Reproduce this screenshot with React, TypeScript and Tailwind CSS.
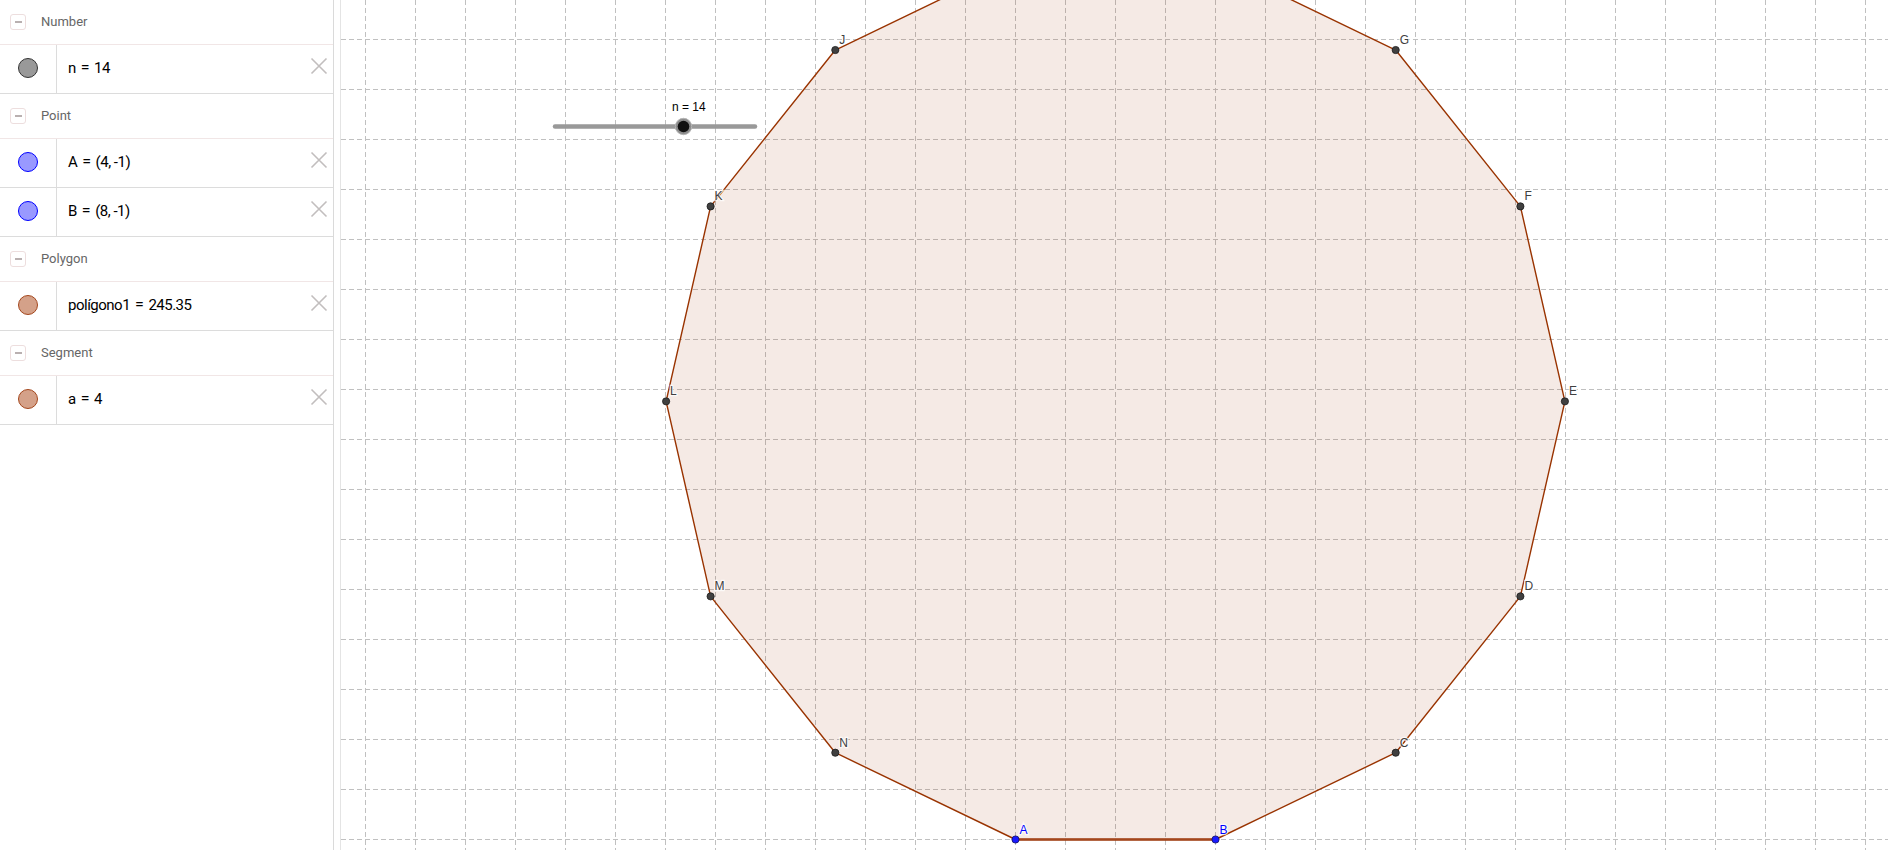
import * as React from "react";

type Item = { name: string; value: string; dot: string };
type Group = { title: string; items: Item[] };

const GROUPS: Group[] = [
  { title: "Number", items: [{ name: "n", value: "14", dot: "gray" }] },
  {
    title: "Point",
    items: [
      { name: "A", value: "(4, -1)", dot: "blue" },
      { name: "B", value: "(8, -1)", dot: "blue" },
    ],
  },
  { title: "Polygon", items: [{ name: "polígono1", value: "245.35", dot: "brown" }] },
  { title: "Segment", items: [{ name: "a", value: "4", dot: "brown" }] },
];

const DOTS: Record<string, string> = {
  gray: "bg-[#999999] border-[#333333]",
  blue: "bg-[#9999ff] border-[#0000ff]",
  brown: "bg-[#d4a189] border-[#a4471d]",
};

const LABELS = "ABCDEFGHIJKLMN".split("");

// regular 14-gon on A=(1015.5, 839.5), B=(1215.5, 839.5)
function vertices() {
  const n = 14;
  const side = 200;
  const R = side / (2 * Math.sin(Math.PI / n));
  const ap = side / (2 * Math.tan(Math.PI / n));
  const cx = 1115.5;
  const cy = 839.5 - ap;
  return LABELS.map((name, k) => {
    const t = ((-90 - 180 / n + (k * 360) / n) * Math.PI) / 180;
    return { name, x: cx + R * Math.cos(t), y: cy - R * Math.sin(t) };
  });
}

function Collapse() {
  return (
    <span className="ml-[10px] flex h-[16px] w-[16px] items-center justify-center rounded-[3px] border border-[#eddede]">
      <span className="h-[1.5px] w-[7px] bg-[#b9b0b0]" />
    </span>
  );
}

function Cross() {
  return (
    <svg width="18" height="18" viewBox="0 0 18 18" className="mr-[5px] mt-[-6px]">
      <path d="M1.5 1.5 L16.5 16.5 M16.5 1.5 L1.5 16.5" stroke="#c2bebe" strokeWidth="1.6" />
    </svg>
  );
}

function AlgebraView() {
  return (
    <div className="h-full w-[334px] shrink-0 border-r border-[#dadada] bg-white" style={{ fontFamily: "Roboto, 'Noto Sans', sans-serif" }}>
      {GROUPS.map((g) => (
        <div key={g.title}>
          <div className="flex h-[45px] items-center border-b border-[#f1e6e6]">
            <Collapse />
            <span className="ml-[15px] text-[13px] text-[#666666]">{g.title}</span>
          </div>
          {g.items.map((it) => (
            <div key={it.name} className="flex h-[49px] items-center border-b border-[#dcdcdc]">
              <div className="flex h-full w-[57px] shrink-0 items-center justify-center border-r border-[#dcdcdc]">
                <span className={"mt-[-3px] h-[20px] w-[20px] rounded-full border " + DOTS[it.dot]} />
              </div>
              <span className="ml-[11px] mt-[-3px] flex flex-1 items-baseline text-[15px] tracking-[-0.5px] text-black">
                <span>{it.name}</span>
                <span className="mx-[5px] text-[16px]">=</span>
                <span>{it.value}</span>
              </span>
              <Cross />
            </div>
          ))}
        </div>
      ))}
    </div>
  );
}

function GraphicsView() {
  const pts = vertices();
  const vx = Array.from({ length: 31 }, (_, k) => 365.5 + 50 * k);
  const hy = Array.from({ length: 17 }, (_, k) => 39.5 + 50 * k);
  const poly = pts.map((p) => `${p.x},${p.y}`).join(" ");
  const label = { fontFamily: "'Liberation Sans', Arial, sans-serif", fontSize: 12 };
  return (
    <div className="h-full flex-1 border-l border-[#e4e4e4] bg-white">
      <svg width="1547" height="850" viewBox="341 0 1547 850" className="block">
        <g stroke="#c0c0c0" strokeWidth="1" strokeDasharray="5 3">
          {vx.map((x) => (
            <line key={"v" + x} x1={x} y1={0} x2={x} y2={850} />
          ))}
          {hy.map((y) => (
            <line key={"h" + y} x1={341} y1={y} x2={1888} y2={y} />
          ))}
        </g>
        <polygon points={poly} fill="#993300" fillOpacity="0.1" stroke="#993300" strokeWidth="1.4" strokeLinejoin="round" />
        <line x1={pts[0].x} y1={pts[0].y} x2={pts[1].x} y2={pts[1].y} stroke="#a3461c" strokeWidth="2.6" />
        {pts
          .filter((p) => p.y > 0)
          .map((p) => {
            const free = p.name === "A" || p.name === "B";
            return (
              <g key={p.name}>
                <circle cx={p.x} cy={p.y} r="3.6" fill={free ? "#1a1aff" : "#404040"} stroke={free ? "#101060" : "#1a1a1a"} strokeWidth="0.8" />
                <text
                  x={p.x + 4}
                  y={p.y - 6}
                  fill={free ? "#0000ff" : "#404040"}
                  stroke="#ffffff"
                  strokeWidth="2.5"
                  strokeOpacity="0.75"
                  paintOrder="stroke"
                  style={label}
                >
                  {p.name}
                </text>
              </g>
            );
          })}
        {/* slider n */}
        <line x1={555} y1={126.5} x2={755} y2={126.5} stroke="#999999" strokeWidth="4.5" strokeLinecap="round" />
        <circle cx={683.5} cy={126.5} r="8.2" fill="#8c8c8c" stroke="#b5b5b5" strokeWidth="1" />
        <circle cx={683.5} cy={126.5} r="5.8" fill="#111111" />
        <text x={672} y={111} fill="#000000" style={label}>
          n = 14
        </text>
      </svg>
    </div>
  );
}

export default function App() {
  return (
    <div className="flex h-[850px] w-[1888px] overflow-hidden bg-white">
      <AlgebraView />
      <div className="h-full w-[6px] shrink-0 bg-white" />
      <GraphicsView />
    </div>
  );
}
